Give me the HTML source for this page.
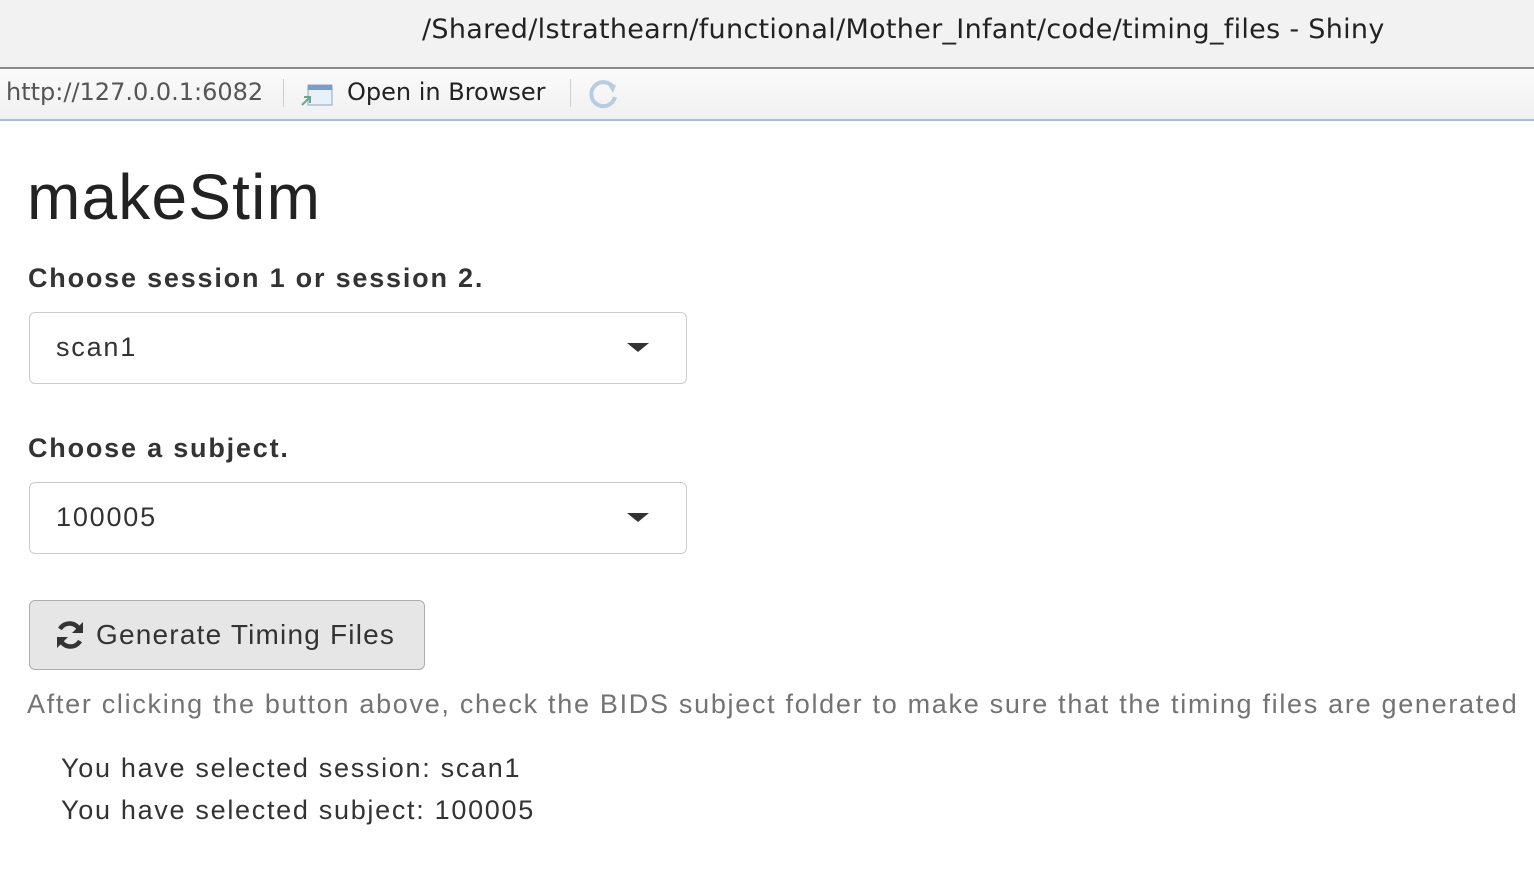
<!DOCTYPE html>
<html><head><meta charset="utf-8"><style>
body{margin:0;width:1534px;height:895px;background:#fff;font-family:"Liberation Sans",sans-serif;overflow:hidden;position:relative}
.tb{position:absolute;left:0;top:0;width:1534px;height:67px;background:#f2f2f2;border-bottom:2px solid #8a8a8a}
.tb span{position:absolute;left:422px;top:14px;font-family:"DejaVu Sans",sans-serif;font-size:27px;color:#222;letter-spacing:0.3px;white-space:nowrap}
.bar{position:absolute;left:0;top:69px;width:1534px;height:50px;background:linear-gradient(#fbfbfb,#f0f0f0);border-bottom:2px solid #9cc0e8;font-family:"DejaVu Sans",sans-serif;font-size:24px}
.a{position:absolute;white-space:nowrap;top:9px}
.sep{position:absolute;top:10px;width:1px;height:28px;background:#ccc}
h1{position:absolute;left:27px;top:160px;margin:0;font-weight:normal;font-size:64px;color:#222;letter-spacing:1.2px}
.lbl{position:absolute;left:28px;font-weight:bold;font-size:27px;color:#333;letter-spacing:1.8px}
.sel{position:absolute;left:29px;width:658px;height:72px;border:1px solid #ccc;border-radius:6px;box-sizing:border-box}
.sel span{position:absolute;left:26px;top:19px;font-size:27px;color:#333;letter-spacing:1.8px}
.sel i{position:absolute;left:597px;top:30px;border-left:11px solid transparent;border-right:11px solid transparent;border-top:9px solid #333}
.btn{position:absolute;left:29px;top:600px;width:396px;height:70px;box-sizing:border-box;background:#e6e6e6;border:1px solid #adadad;border-radius:6px}
.btn span{position:absolute;left:66px;top:18px;font-size:28px;color:#333;letter-spacing:1.2px}
.t{position:absolute;font-size:27px;white-space:nowrap;letter-spacing:1.7px}
</style></head><body>
<div class="tb"><span>/Shared/lstrathearn/functional/Mother_Infant/code/timing_files - Shiny</span></div>
<div class="bar">
<span class="a" style="left:6px;color:#555">http://127.0.0.1:6082</span>
<div class="sep" style="left:283px"></div>
<svg style="position:absolute;left:300px;top:10px" width="34" height="30"><rect x="8" y="6" width="24" height="20" fill="#eaf0f8" stroke="#8aa6c8"/><rect x="8" y="6" width="24" height="5" fill="#7a9cc8"/><path d="M2 26 L10 18 M4 18 L10 18 L10 24" stroke="#6a8" stroke-width="2" fill="none"/></svg>
<span class="a" style="left:347px;color:#222">Open in Browser</span>
<div class="sep" style="left:570px"></div>
<svg style="position:absolute;left:585px;top:8px" width="36" height="34"><path d="M28 10 A12 12 0 1 0 30 20" stroke="#b8cce0" stroke-width="4" fill="none"/><path d="M22 6 L31 8 L28 16" fill="#b8cce0"/></svg>
</div>
<h1>makeStim</h1>
<div class="lbl" style="top:263px">Choose session 1 or session 2.</div>
<div class="sel" style="top:312px"><span>scan1</span><i></i></div>
<div class="lbl" style="top:433px">Choose a subject.</div>
<div class="sel" style="top:482px"><span>100005</span><i></i></div>
<div class="btn"><svg style="position:absolute;left:24px;top:18px" width="32" height="32" viewBox="0 0 32 32"><path d="M26 12 A11 11 0 0 0 6 10" stroke="#333" stroke-width="4.5" fill="none"/><path d="M29 3 L29 14 L18 14 Z" fill="#333"/><path d="M6 20 A11 11 0 0 0 26 22" stroke="#333" stroke-width="4.5" fill="none"/><path d="M3 29 L3 18 L14 18 Z" fill="#333"/></svg><span>Generate Timing Files</span></div>
<div class="t" style="left:27px;top:689px;color:#737373">After clicking the button above, check the BIDS subject folder to make sure that the timing files are generated</div>
<div class="t" style="left:61px;top:753px;color:#333">You have selected session: scan1</div>
<div class="t" style="left:61px;top:795px;color:#333">You have selected subject: 100005</div>
</body></html>
